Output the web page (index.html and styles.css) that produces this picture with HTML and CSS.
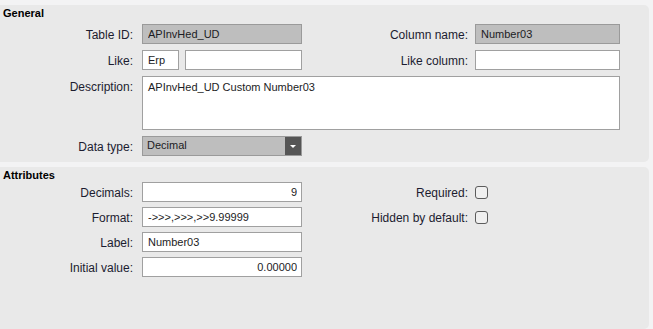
FILE: index.html
```html
<!DOCTYPE html>
<html lang="en">
<head>
  <meta charset="UTF-8" />
  <meta name="viewport" content="width=device-width, initial-scale=1.0"/>
  <title>Column properties</title>
  <link rel="stylesheet" href="styles.css">
</head>
<body>

  <!-- General -->
  <section class="panel panel-general">
    <h3 class="panel-title">General</h3>
    <div class="form-grid">
      <label class="lbl">Table ID:</label>
      <input class="field field-off" value="APInvHed_UD" readonly>
      <label class="lbl lbl-right">Column name:</label>
      <input class="field field-off" value="Number03" readonly>

      <label class="lbl">Like:</label>
      <div class="like-pair">
        <input class="field field-short" value="Erp">
        <input class="field" value="">
      </div>
      <label class="lbl lbl-right">Like column:</label>
      <input class="field" value="">

      <label class="lbl">Description:</label>
      <textarea class="field area">APInvHed_UD Custom Number03</textarea>

      <label class="lbl">Data type:</label>
      <div class="select">
        <span class="select-text">Decimal</span>
        <span class="select-btn"><span class="caret"></span></span>
      </div>
    </div>
  </section>

  <!-- Attributes -->
  <section class="panel panel-attr">
    <h3 class="panel-title">Attributes</h3>
    <div class="form-grid form-grid-attr">
      <label class="lbl">Decimals:</label>
      <input class="field num" value="9">
      <label class="lbl lbl-right">Required:</label>
      <span class="check"></span>

      <label class="lbl">Format:</label>
      <input class="field" value="->>>,>>>,>>9.99999">
      <label class="lbl lbl-right">Hidden by default:</label>
      <span class="check"></span>

      <label class="lbl">Label:</label>
      <input class="field" value="Number03">
      <span></span><span></span>

      <label class="lbl">Initial value:</label>
      <input class="field num" value="0.00000">
    </div>
  </section>

</body>
</html>
```

FILE: styles.css
```css
body {
  margin: 0;
  background: #f3f3f4;
  font-family: "Liberation Sans", Arial, sans-serif;
  color: #1c1c24;
}
.panel {
  background: #e9e9e9;
  margin-right: 4px;
  border-radius: 0 5px 5px 0;
  padding: 1px 0 6px 0;
}
.panel-general {
  margin-top: 5px;
}
.panel-attr {
  margin-top: 5px;
  height: 155px;
}
.panel-title {
  margin: 0 0 4px 0;
  padding-left: 3px;
  font-size: 11px;
  line-height: 14px;
  font-weight: bold;
  color: #000;
}
.panel-attr .panel-title {
  margin-bottom: 0;
}
.form-grid {
  display: grid;
  grid-template-columns: 142px 160px 173px 145px;
  row-gap: 6px;
  align-items: start;
}
.form-grid-attr {
  grid-auto-rows: 20px;
  row-gap: 5px;
}
.lbl {
  font-size: 12px;
  line-height: 17px;
  height: 20px;
  box-sizing: border-box;
  padding: 3px 9px 0 0;
  text-align: right;
  white-space: nowrap;
  color: #1c1c30;
}
.lbl-right {
  padding-right: 7px;
}
.field {
  box-sizing: border-box;
  height: 20px;
  width: 100%;
  margin: 0;
  padding: 0 4px 1px 5px;
  border: 1px solid #a0a0a0;
  background: #fff;
  font-family: "Liberation Sans", Arial, sans-serif;
  font-size: 11px;
  color: #1c1c24;
  outline: none;
}
.field-off {
  background: #bebebe;
  border-color: #9a9a9a;
}
.like-pair {
  display: flex;
  gap: 6px;
}
.field-short {
  width: 37px;
  flex: none;
}
.area {
  grid-column: 2 / 5;
  height: 54px;
  resize: none;
  padding: 4px 5px;
  line-height: 13px;
  overflow: hidden;
}
.num {
  text-align: right;
}
.select {
  display: flex;
  box-sizing: border-box;
  height: 20px;
  border: 1px solid #9a9a9a;
  background: #bebebe;
}
.select-text {
  flex: 1;
  font-size: 11px;
  line-height: 17px;
  padding-left: 4px;
}
.select-btn {
  width: 16px;
  background: #555555;
  display: flex;
  align-items: center;
  justify-content: center;
}
.caret {
  width: 0;
  height: 0;
  border-left: 3px solid transparent;
  border-right: 3px solid transparent;
  border-top: 3px solid #fff;
  margin-top: 1px;
}
.check {
  box-sizing: border-box;
  width: 13px;
  height: 13px;
  margin-top: 4px;
  border: 1px solid #5c5c5c;
  border-radius: 3px;
  background: #f0f0f0;
}
```
